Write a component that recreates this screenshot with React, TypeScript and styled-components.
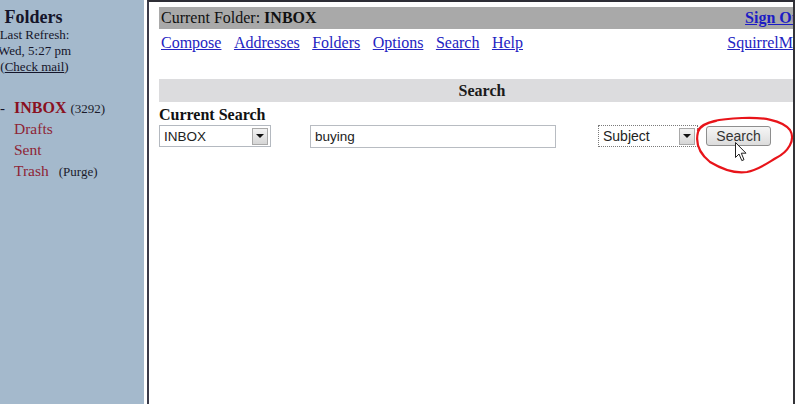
import { createGlobalStyle, styled } from "styled-components";

const GlobalStyle = createGlobalStyle`
    html, body {
        margin: 0;
        padding: 0;
        background: #ffffff;
    }
`;

const Page = styled.div`
    position: relative;
    display: flex;
    height: 404px;
    width: 802px;
    overflow: hidden;
    background: #ffffff;
    font-family: "Liberation Serif", "Times New Roman", serif;
`;

const Sidebar = styled.div`
    width: 144px;
    flex-shrink: 0;
    background: #a4b9cc;
    overflow: hidden;
    padding-top: 7px;
    box-sizing: border-box;
    color: #15152a;
`;

const RefreshBox = styled.div`
    width: 69px;
    display: flex;
    flex-direction: column;
    align-items: center;
    white-space: nowrap;
`;

const SideTitle = styled.div`
    font-size: 18px;
    font-weight: bold;
    line-height: 20px;
    margin-left: -2px;
`;

const SideSmall = styled.div`
    font-size: 13px;
    line-height: 16px;
`;

const CheckLink = styled.span`
    text-decoration: underline;
`;

const FolderList = styled.ul`
    list-style: none;
    margin: 22px 0 0 0;
    padding: 0;
`;

const FolderRow = styled.li`
    display: flex;
    align-items: baseline;
    height: 21px;
    line-height: 21px;
    white-space: nowrap;
`;

const Dash = styled.span`
    width: 14px;
    font-size: 15px;
    color: #15152a;
`;

const FolderName = styled.span<{ $current?: boolean }>`
    font-size: ${p => (p.$current ? "16px" : "15.5px")};
    font-weight: ${p => (p.$current ? "bold" : "normal")};
    color: ${p => (p.$current ? "#8a1020" : "#8e2435")};
`;

const FolderNote = styled.span<{ $gap: number }>`
    font-size: 13px;
    margin-left: ${p => p.$gap}px;
    color: #1b1b2b;
`;

const MainFrame = styled.div`
    margin-left: 3px;
    width: 634px;
    flex-shrink: 0;
    border-left: 2px solid #3a3a48;
    border-right: 2px solid #333338;
    border-top: 2px solid #2e2e36;
    overflow: hidden;
    padding: 5px 0 0 10px;
`;

const Content = styled.div`
    width: 650px;
`;

const TopBar = styled.div`
    height: 22px;
    background: #a9a9a9;
    display: flex;
    align-items: center;
    justify-content: space-between;
    padding: 0 3px 0 2px;
    font-size: 16px;
    color: #111;
`;

const Bold = styled.b``;

const SignOut = styled.span`
    font-weight: bold;
    color: #1c1cc4;
    text-decoration: underline;
`;

const NavRow = styled.div`
    display: flex;
    align-items: center;
    justify-content: space-between;
    margin-top: 4px;
    height: 20px;
    padding-left: 2px;
`;

const NavLinks = styled.div`
    display: flex;
    gap: 12.5px;
`;

const NavLink = styled.span`
    font-size: 16px;
    color: #2323c2;
    text-decoration: underline;
`;

const SectionBar = styled.div`
    margin-top: 26px;
    height: 23px;
    background: #dcdcde;
    display: flex;
    align-items: center;
    justify-content: center;
    padding-right: 4px;
    font-size: 16px;
    font-weight: bold;
    color: #1a1a1a;
`;

const SectionTitle = styled.div`
    margin-top: 3px;
    height: 19px;
    line-height: 19px;
    font-size: 16px;
    font-weight: bold;
    color: #111;
`;

const FormRow = styled.div`
    display: flex;
    align-items: center;
    height: 24px;
    font-family: "Liberation Sans", Arial, sans-serif;
`;

const SelectBox = styled.div<{ $width: number; $gap: number; $focus?: boolean }>`
    width: ${p => p.$width}px;
    margin-left: ${p => p.$gap}px;
    height: 22px;
    box-sizing: border-box;
    border: 1px ${p => (p.$focus ? "dotted #7a7a7a" : "solid #b4b9c0")};
    display: flex;
    align-items: center;
    justify-content: space-between;
    padding: 0 2px 0 4px;
    background: #fff;
`;

const FieldText = styled.span<{ $size: number }>`
    font-size: ${p => p.$size}px;
    color: #222;
`;

const DropButton = styled.div`
    width: 16px;
    height: 17px;
    box-sizing: border-box;
    border: 1px solid #a9a9a9;
    background: linear-gradient(#f2f2f2, #d6d6d6);
    display: flex;
    align-items: center;
    justify-content: center;
    &::after {
        content: "";
        border-left: 4px solid transparent;
        border-right: 4px solid transparent;
        border-top: 4px solid #111;
    }
`;

const TextInput = styled.div`
    width: 246px;
    margin-left: 39px;
    height: 23px;
    box-sizing: border-box;
    border: 1px solid #b8bcc2;
    display: flex;
    align-items: center;
    padding-left: 4px;
    background: #fff;
`;

const Button = styled.div`
    margin-left: 8px;
    width: 65px;
    height: 20px;
    box-sizing: border-box;
    border: 1px solid #8e8e8e;
    border-radius: 3px;
    background: linear-gradient(#f6f6f6, #dcdcdc);
    display: flex;
    align-items: center;
    justify-content: center;
    font-size: 14px;
    color: #333;
`;

const Annotation = styled.svg`
    position: absolute;
    left: 690px;
    top: 112px;
    overflow: visible;
    pointer-events: none;
`;

const Pointer = styled.svg`
    position: absolute;
    left: 735px;
    top: 142px;
    overflow: visible;
`;

const folders = [
    { name: "INBOX", current: true, note: "(3292)", gap: 4 },
    { name: "Drafts" },
    { name: "Sent" },
    { name: "Trash", note: "(Purge)", gap: 10 },
];

const links = ["Compose", "Addresses", "Folders", "Options", "Search", "Help"];

function App() {
    return <Page>
        <GlobalStyle />
        <Sidebar>
            <RefreshBox>
                <SideTitle>Folders</SideTitle>
                <SideSmall>Last Refresh:</SideSmall>
                <SideSmall>Wed, 5:27 pm</SideSmall>
                <SideSmall>(<CheckLink>Check mail</CheckLink>)</SideSmall>
            </RefreshBox>
            <FolderList>
                {folders.map(f => (
                    <FolderRow key={f.name}>
                        <Dash>{f.current ? "-" : ""}</Dash>
                        <FolderName $current={f.current}>{f.name}</FolderName>
                        {f.note && <FolderNote $gap={f.gap ?? 4}>{f.note}</FolderNote>}
                    </FolderRow>
                ))}
            </FolderList>
        </Sidebar>

        <MainFrame>
            <Content>
                <TopBar>
                    <span>Current Folder: <Bold>INBOX</Bold></span>
                    <SignOut>Sign Out</SignOut>
                </TopBar>
                <NavRow>
                    <NavLinks>
                        {links.map(l => <NavLink key={l}>{l}</NavLink>)}
                    </NavLinks>
                    <NavLink>SquirrelMail</NavLink>
                </NavRow>
                <SectionBar>Search</SectionBar>
                <SectionTitle>Current Search</SectionTitle>
                <FormRow>
                    <SelectBox $width={112} $gap={0}>
                        <FieldText $size={13.5}>INBOX</FieldText>
                        <DropButton />
                    </SelectBox>
                    <TextInput>
                        <FieldText $size={13.5}>buying</FieldText>
                    </TextInput>
                    <SelectBox $width={100} $gap={42} $focus>
                        <FieldText $size={14}>Subject</FieldText>
                        <DropButton />
                    </SelectBox>
                    <Button>Search</Button>
                </FormRow>
            </Content>
        </MainFrame>

        {/* hand drawn highlight round the button */}
        <Annotation width="105" height="66" viewBox="0 0 105 66">
            <path
                d="M 8 18 C 14 9, 30 7, 52 6 C 72 5, 92 8, 100 18 C 106 28, 98 40, 86 46 C 76 52, 68 58, 57 60 C 44 62, 30 56, 20 50 C 10 42, 5 32, 8 20 C 10 14, 16 11, 26 9"
                fill="none"
                stroke="#e8141a"
                strokeWidth="2.2"
                strokeLinecap="round"
            />
        </Annotation>
        <Pointer width="12" height="20" viewBox="0 0 12 20">
            <path
                d="M 0.5 0.5 L 0.5 15.5 L 4 12 L 6.8 18.6 L 9 17.7 L 6.3 11.2 L 11 11.2 Z"
                fill="#ffffff"
                stroke="#222"
                strokeWidth="1"
                strokeLinejoin="round"
            />
        </Pointer>
    </Page>;
}
export default App;
